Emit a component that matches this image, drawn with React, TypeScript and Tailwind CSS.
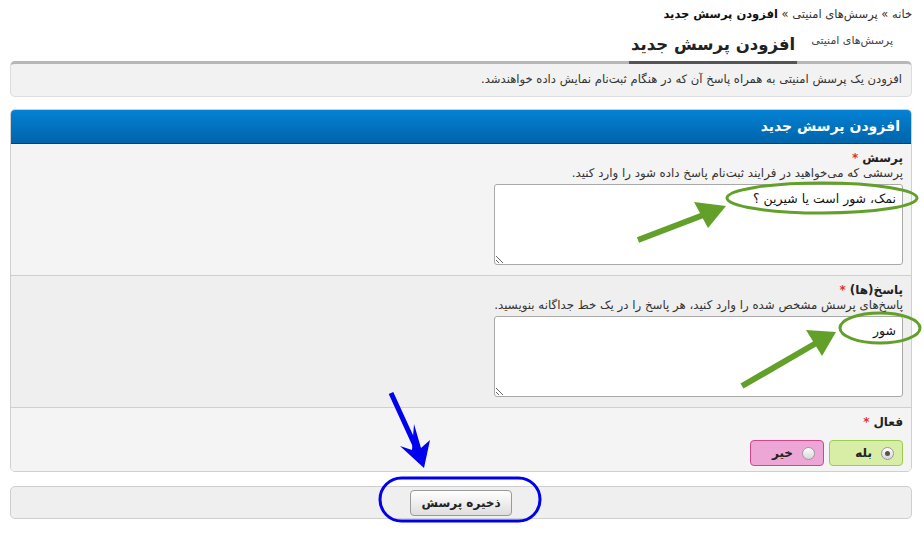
import { useState } from "react";

const font = "font-['DejaVu_Sans',Tahoma,sans-serif]";

function Required() {
  return <span className="mr-1 text-[#d33]">*</span>;
}

function FieldRow({
  label,
  hint,
  value,
  shade,
}: {
  label: string;
  hint: string;
  value: string;
  shade: string;
}) {
  return (
    <div className={`flex flex-col border-b border-[#cfcfcf] px-2 pb-[10px] pt-[7px] ${shade}`}>
      <div className="text-[12px] font-bold leading-[15px] text-[#222]">
        {label}
        <Required />
      </div>
      <div className="text-[11.8px] leading-[14px] text-[#333]">{hint}</div>
      <textarea
        defaultValue={value}
        className="mt-[4px] h-[81px] w-[409px] rounded-[3px] border border-[#a9a9a9] bg-white px-[6px] py-[5px] text-[12.5px] text-[#111] outline-none"
      />
    </div>
  );
}

function Choice({
  label,
  checked,
  tone,
  onPick,
}: {
  label: string;
  checked: boolean;
  tone: string;
  onPick: () => void;
}) {
  return (
    <button
      onClick={onPick}
      className={`flex h-[26px] w-[74px] items-center gap-[9px] rounded-[4px] border px-[8px] text-[12px] font-bold text-[#222] ${tone}`}
    >
      <span className="flex h-[13px] w-[13px] items-center justify-center rounded-full border border-[#9a9a9a] bg-gradient-to-b from-white to-[#d6d6d6]">
        {checked && <span className="h-[5px] w-[5px] rounded-full bg-[#555]" />}
      </span>
      {label}
    </button>
  );
}

function Marks() {
  return (
    <svg className="pointer-events-none absolute left-0 top-0" width="924" height="540">
      <g fill="none" stroke="#62a02a" strokeWidth="3">
        <ellipse cx="822" cy="198" rx="95" ry="15" />
        <ellipse cx="880" cy="328" rx="40" ry="15" />
      </g>
      <g stroke="#62a02a" strokeWidth="6" strokeLinecap="butt">
        <line x1="638" y1="240" x2="706" y2="214" />
        <line x1="742" y1="386" x2="818" y2="342" />
      </g>
      <g fill="#62a02a">
        <polygon points="726,206 694,202 708,228" />
        <polygon points="836,332 806,330 822,356" />
      </g>
      <line x1="391" y1="393" x2="418" y2="452" stroke="#0000ee" strokeWidth="5" />
      <polygon points="424,468 400,446 412,450 414,424 421,448 430,440" fill="#0000ee" />
      <rect x="380" y="478" width="160" height="43" rx="21.5" fill="none" stroke="#0000ee" strokeWidth="3" />
    </svg>
  );
}

export default function App() {
  const [active, setActive] = useState(true);

  return (
    <div dir="rtl" className={`relative h-[540px] w-[924px] overflow-hidden bg-white ${font}`}>
      <div className="flex flex-col pl-[10px] pr-[12px]">
        {/* breadcrumb */}
        <div className="pt-[6px] text-[11.5px] leading-[16px] text-[#333]">
          خانه » پرسش‌های امنیتی » <span className="font-bold text-[#111]">افزودن پرسش جدید</span>
        </div>

        {/* tabs */}
        <div className="mt-[9px] flex items-end gap-[14px] pr-[19px]">
          <span className="pb-[12px] text-[11px] text-[#444]">پرسش‌های امنیتی</span>
          <span className="relative z-10 -mb-[3px] border-b-[3px] border-[#555] px-[2px] pb-[2px] text-[16.5px] font-bold leading-[28px] text-[#222]">
            افزودن پرسش جدید
          </span>
        </div>

        {/* info note */}
        <div className="flex h-[36px] items-center rounded-[5px] border border-t-[3px] border-[#dcdcdc] border-t-[#b7b7b7] bg-[#f2f2f2] px-[9px] text-[11.6px] text-[#333]">
          افزودن یک پرسش امنیتی به همراه پاسخ آن که در هنگام ثبت‌نام نمایش داده خواهندشد.
        </div>

        {/* form panel */}
        <div className="mt-[12px] overflow-hidden rounded-[5px] border border-[#cfcfcf]">
          <div className="flex h-[34px] items-center border-b border-[#2a3a44] bg-gradient-to-b from-[#0482d4] to-[#0064aa] px-[11px] text-[14px] font-bold text-white">
            افزودن پرسش جدید
          </div>
          <FieldRow
            label="پرسش"
            hint="پرسشی که می‌خواهید در فرایند ثبت‌نام پاسخ داده شود را وارد کنید."
            value="نمک، شور است یا شیرین ؟"
            shade="bg-[#f4f4f4]"
          />
          <FieldRow
            label="پاسخ(ها)"
            hint="پاسخ‌های پرسش مشخص شده را وارد کنید، هر پاسخ را در یک خط جداگانه بنویسید."
            value="شور"
            shade="bg-[#efefef]"
          />
          <div className="flex flex-col bg-[#f4f4f4] px-2 pb-[5px] pt-[7px]">
            <div className="text-[12px] font-bold leading-[15px] text-[#222]">
              فعال
              <Required />
            </div>
            <div className="mt-[10px] flex gap-[5px]">
              <Choice
                label="بله"
                checked={active}
                tone="border-[#9ccd50] bg-[#d8eda6]"
                onPick={() => setActive(true)}
              />
              <Choice
                label="خیر"
                checked={!active}
                tone="border-[#d4458f] bg-[#eda7d6]"
                onPick={() => setActive(false)}
              />
            </div>
          </div>
        </div>

        {/* actions */}
        <div className="mt-[14px] flex h-[33px] items-center justify-center rounded-[5px] border border-[#cfcfcf] bg-[#efefef]">
          <button className="h-[26px] rounded-[4px] border border-[#9a9a9a] bg-gradient-to-b from-white to-[#dedede] px-[10px] text-[12px] font-bold text-[#222]">
            ذخیره پرسش
          </button>
        </div>
      </div>
      <Marks />
    </div>
  );
}
